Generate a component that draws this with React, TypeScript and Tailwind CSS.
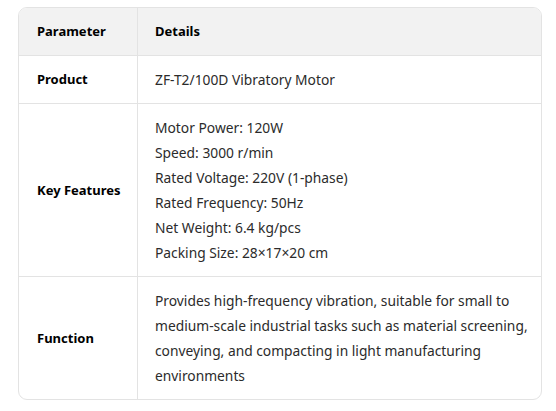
import React from "react";

const features = [
  "Motor Power: 120W",
  "Speed: 3000 r/min",
  "Rated Voltage: 220V (1-phase)",
  "Rated Frequency: 50Hz",
  "Net Weight: 6.4 kg/pcs",
  "Packing Size: 28×17×20 cm",
];

export default function App() {
  return (
    <div className="w-[556px] h-[411px] bg-white pt-[7px] pl-[18px]" style={{ fontFamily: '"Noto Sans", sans-serif' }}>
      <div className="w-[524px] border border-[#e3e3e3] rounded-[9px] overflow-hidden text-[13.8px] leading-[25px] text-[#2b2b2b]">
        <div className="flex bg-[#f2f2f2] border-b border-[#e3e3e3]">
          <div className="w-[119px] shrink-0 border-r border-[#e3e3e3] pl-[18px] pr-[4px] py-[11px] font-bold text-[13px] text-black">Parameter</div>
          <div className="flex-1 px-[17px] py-[11px] font-bold text-[13px] text-black">Details</div>
        </div>
        <div className="flex border-b border-[#e3e3e3]">
          <div className="w-[119px] shrink-0 border-r border-[#e3e3e3] pl-[18px] pr-[4px] py-[11px] font-bold text-[13px] text-black flex items-center">Product</div>
          <div className="flex-1 px-[17px] py-[11px]">ZF-T2/100D Vibratory Motor</div>
        </div>
        <div className="flex border-b border-[#e3e3e3]">
          <div className="w-[119px] shrink-0 border-r border-[#e3e3e3] pl-[18px] pr-[4px] py-[11px] font-bold text-[13px] text-black flex items-center whitespace-nowrap">Key Features</div>
          <div className="flex-1 px-[17px] py-[11px]">
            {features.map((f) => (
              <div key={f}>{f}</div>
            ))}
          </div>
        </div>
        <div className="flex">
          <div className="w-[119px] shrink-0 border-r border-[#e3e3e3] pl-[18px] pr-[4px] py-[11px] font-bold text-[13px] text-black flex items-center">Function</div>
          <div className="flex-1 pl-[17px] pr-[2px] py-[11px]">
            Provides high-frequency vibration, suitable for small to medium-scale industrial tasks such as material screening, conveying, and compacting in light manufacturing environments
          </div>
        </div>
      </div>
    </div>
  );
}
